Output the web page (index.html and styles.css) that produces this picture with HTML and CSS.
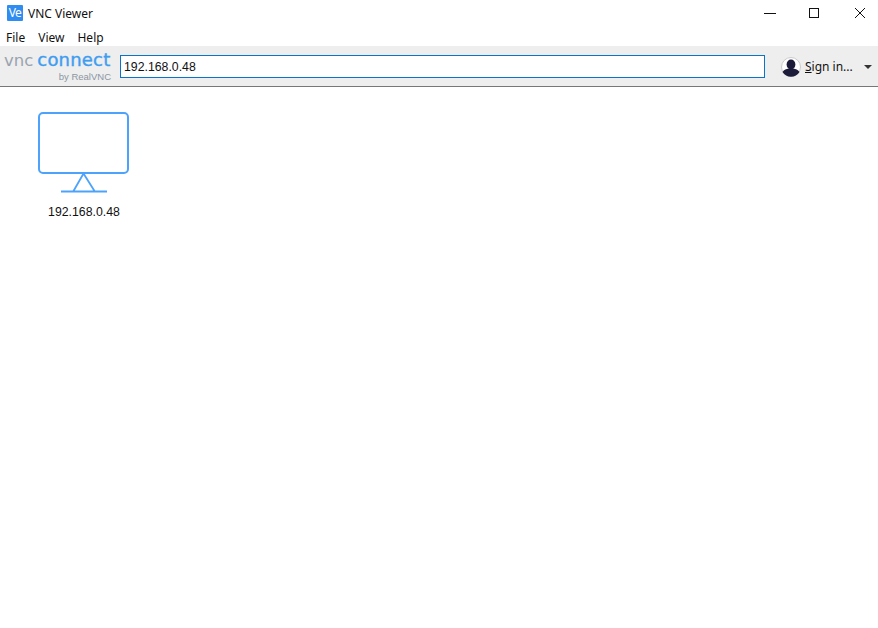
FILE: index.html
```html
<!DOCTYPE html>
<html lang="en">
<head>
    <meta charset="UTF-8">
    <meta name="viewport" content="width=device-width, initial-scale=1.0">
    <title>VNC Viewer</title>
    <link rel="stylesheet" href="styles.css">
</head>
<body>
    <header class="title-bar">
        <div class="app-title">
            <span class="app-icon">Ve</span>
            <span>VNC Viewer</span>
        </div>
        <div class="window-controls">
            <button type="button" class="window-btn minimize-btn" aria-label="Minimize">
                <svg width="12" height="12" viewBox="0 0 12 12"><path d="M0 6.5h12" stroke="#111" fill="none"/></svg>
            </button>
            <button type="button" class="window-btn" aria-label="Maximize">
                <svg width="12" height="12" viewBox="0 0 12 12"><rect x="1.5" y="1.5" width="9" height="9" stroke="#111" fill="none"/></svg>
            </button>
            <button type="button" class="window-btn" aria-label="Close">
                <svg width="12" height="12" viewBox="0 0 12 12"><path d="M1 1l10 10M11 1L1 11" stroke="#111" fill="none"/></svg>
            </button>
        </div>
    </header>

    <nav class="menu-bar">
        <span class="menu-item">File</span>
        <span class="menu-item">View</span>
        <span class="menu-item">Help</span>
    </nav>

    <div class="toolbar">
        <div class="brand">
            <div class="brand-name"><span class="brand-vnc">vnc</span><span class="brand-connect">connect</span></div>
            <div class="brand-by">by RealVNC</div>
        </div>
        <input class="address-input" type="text" value="192.168.0.48" aria-label="Address">
        <div class="account">
            <svg class="avatar" width="20" height="20" viewBox="0 0 20 20">
                <circle cx="10" cy="10" r="9.5" fill="#fff" stroke="#ccc"/>
                <ellipse cx="10" cy="7.5" rx="4.4" ry="5" fill="#1c1c3a"/>
                <path d="M1.5 15c1.5-2.5 4-3 6-3.5h5c2 .5 4.500 1 6 3.500a10 10 0 0 1-17 0z" fill="#1c1c3a"/>
            </svg>
            <span class="sign-in"><u>S</u>ign in...</span>
            <span class="caret"></span>
        </div>
    </div>

    <main class="connections">
        <article class="connection">
            <svg width="92" height="82" viewBox="0 0 92 82">
                <rect x="1" y="1" width="89" height="60" rx="4" fill="#fff" stroke="#4da3fb" stroke-width="2"/>
                <path d="M35.500 79L45.500 61.500L56.500 79M23 79.500h46" fill="none" stroke="#4da3fb" stroke-width="1.800"/>
            </svg>
            <div class="connection-name">192.168.0.48</div>
        </article>
    </main>
</body>
</html>
```
FILE: styles.css
```css
* {
    box-sizing: border-box;
}

body {
    margin: 0;
    height: 628px;
    overflow: hidden;
    background: #fff;
    color: #111;
    font-family: 'Liberation Sans', Arial, sans-serif;
    font-size: 12px;
}

.title-bar {
    display: flex;
    justify-content: space-between;
    align-items: center;
    height: 26px;
}

.app-title {
    display: flex;
    align-items: center;
    gap: 5px;
    padding-left: 7px;
    font-family: 'Noto Sans', sans-serif;
    font-size: 12px;
}

.app-icon {
    display: block;
    width: 16px;
    height: 16px;
    background: #2f8cf0;
    color: #fff;
    border-radius: 1px;
    font-size: 12px;
    letter-spacing: -0.5px;
    line-height: 15px;
    text-align: center;
}

.window-controls {
    display: flex;
    gap: 34px;
    padding-right: 12px;
}

.window-btn {
    display: flex;
    justify-content: center;
    align-items: center;
    width: 12px;
    height: 26px;
    padding: 0;
    border: none;
    background: none;
}

.minimize-btn {
    margin-right: -2px;
}

.menu-bar {
    display: flex;
    gap: 13px;
    align-items: center;
    height: 20px;
    padding: 2px 0 0 6px;
    font-family: 'Noto Sans', sans-serif;
    font-size: 12px;
}

.toolbar {
    display: flex;
    align-items: center;
    height: 41px;
    padding-top: 1px;
    background: #eeeeee;
    border-bottom: 1px solid #777;
}

.brand {
    flex: none;
    width: 120px;
    padding: 1px 9px 0 4px;
    text-align: right;
}

.brand-name {
    font-family: 'DejaVu Sans', sans-serif;
    line-height: 15px;
    white-space: nowrap;
    text-align: left;
}

.brand-vnc {
    margin-right: 4px;
    color: #9aa3ae;
    font-size: 16.500px;
}

.brand-connect {
    color: #3f9df0;
    font-size: 18px;
    letter-spacing: 0.2px;
    -webkit-text-stroke: 0.4px #3f9df0;
}

.brand-by {
    margin-top: 1px;
    color: #8b96a3;
    font-size: 9.500px;
    line-height: 12px;
}

.address-input {
    flex: none;
    width: 645px;
    height: 23px;
    padding: 0 3px;
    border: 1px solid #0a74c9;
    outline: none;
    background: #fff;
    color: #111;
    font-family: 'Liberation Sans', Arial, sans-serif;
    font-size: 12.300px;
}

.account {
    display: flex;
    align-items: center;
    margin-left: 16px;
}

.sign-in {
    margin-left: 4px;
    font-family: 'Noto Sans', sans-serif;
    font-size: 12px;
}

.caret {
    width: 0;
    height: 0;
    margin-left: 11px;
    border-left: 4px solid transparent;
    border-right: 4px solid transparent;
    border-top: 4px solid #333;
}

.connections {
    display: flex;
    padding: 25px 0 0 38px;
}

.connection {
    display: flex;
    flex-direction: column;
    align-items: center;
    width: 92px;
}

.connection-name {
    margin-top: 11px;
    font-size: 12.300px;
    white-space: nowrap;
}
```
